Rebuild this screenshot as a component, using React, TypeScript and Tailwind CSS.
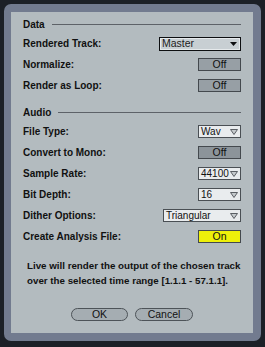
import React from "react";

const font = { fontFamily: '"Liberation Sans", Arial, sans-serif' };

function Header({ title }: { title: string }) {
  return (
    <div className="flex items-center h-[17px] gap-[7px]">
      <span className="text-[10px] font-bold text-[#111]">{title}</span>
      <div className="flex-1 h-px bg-[#5d6268]" />
    </div>
  );
}

function Toggle({ label, on, dark }: { label: string; on?: boolean; dark?: boolean }) {
  const fill = on ? "bg-[#eef00a]" : dark ? "bg-[#8c949a]" : "bg-[#979fa5]";
  return (
    <div
      className={`w-[43px] h-[13px] border border-[#44494e] ${fill} flex items-center justify-center text-[10.5px] leading-none text-[#111]`}
    >
      {label}
    </div>
  );
}

function Arrow() {
  return (
    <svg width="8" height="6" viewBox="0 0 8 6" className="shrink-0">
      <polygon points="0.5,0.5 7.5,0.5 4,5.5" fill="#c5cacd" stroke="#5a5f64" strokeWidth="1" />
    </svg>
  );
}

function Drop({ value, w }: { value: string; w: string }) {
  return (
    <div
      className={`${w} h-[13px] border border-[#4a4f54] bg-[#e9ecee] flex items-center justify-between pl-[2px] pr-[2px] text-[10px] leading-none text-[#111]`}
    >
      <span>{value}</span>
      <Arrow />
    </div>
  );
}

function Row({ label, children }: { label: string; children: React.ReactNode }) {
  return (
    <div className="flex items-center justify-between h-[21px]">
      <span className="text-[10px] font-bold text-[#111]">{label}</span>
      {children}
    </div>
  );
}

export default function App() {
  return (
    <div className="w-[265px] h-[347px] bg-[#1c2027] pt-[4px] pl-[4px]" style={font}>
      <div className="w-[257px] h-[337px] bg-[#727b8f] rounded-[7px] pt-[8px] pl-[7px]">
        <div className="w-[242px] h-[321px] bg-[#b3bbbf] px-3 pt-[4px]">
          <Header title="Data" />
          <Row label="Rendered Track:">
            <div className="w-[82px] h-[14px] border-[1.5px] border-[#0d0f11] bg-[#c8cfd3] flex items-center justify-between pl-[2px] pr-[3px] text-[10.5px] leading-none text-[#222] outline outline-1 outline-[#e6eaec] -outline-offset-[2.5px]">
              <span>Master</span>
              <svg width="7" height="4" viewBox="0 0 7 4">
                <polygon points="0,0 7,0 3.5,4" fill="#0d0f11" />
              </svg>
            </div>
          </Row>
          <Row label="Normalize:">
            <Toggle label="Off" />
          </Row>
          <Row label="Render as Loop:">
            <Toggle label="Off" />
          </Row>

          <div className="mt-[8px]">
            <Header title="Audio" />
          </div>
          <Row label="File Type:">
            <Drop value="Wav" w="w-[43px]" />
          </Row>
          <Row label="Convert to Mono:">
            <Toggle label="Off" dark />
          </Row>
          <Row label="Sample Rate:">
            <Drop value="44100" w="w-[43px]" />
          </Row>
          <Row label="Bit Depth:">
            <Drop value="16" w="w-[43px]" />
          </Row>
          <Row label="Dither Options:">
            <Drop value="Triangular" w="w-[78px]" />
          </Row>
          <Row label="Create Analysis File:">
            <Toggle label="On" on />
          </Row>

          <div className="mt-[11px] pl-1 text-[9.75px] font-bold leading-[15px] text-[#111] whitespace-nowrap">
            <div>Live will render the output of the chosen track</div>
            <div>over the selected time range [1.1.1 - 57.1.1].</div>
          </div>

          <div className="flex justify-center gap-[7px] mt-[20px]">
            <div className="w-[57px] h-[13px] rounded-full border border-[#4d5358] bg-[#a5adb2] flex items-center justify-center text-[10.5px] leading-none text-[#111]">
              OK
            </div>
            <div className="w-[58px] h-[13px] rounded-full border border-[#4d5358] bg-[#a5adb2] flex items-center justify-center text-[10.5px] leading-none text-[#111]">
              Cancel
            </div>
          </div>
        </div>
      </div>
    </div>
  );
}
